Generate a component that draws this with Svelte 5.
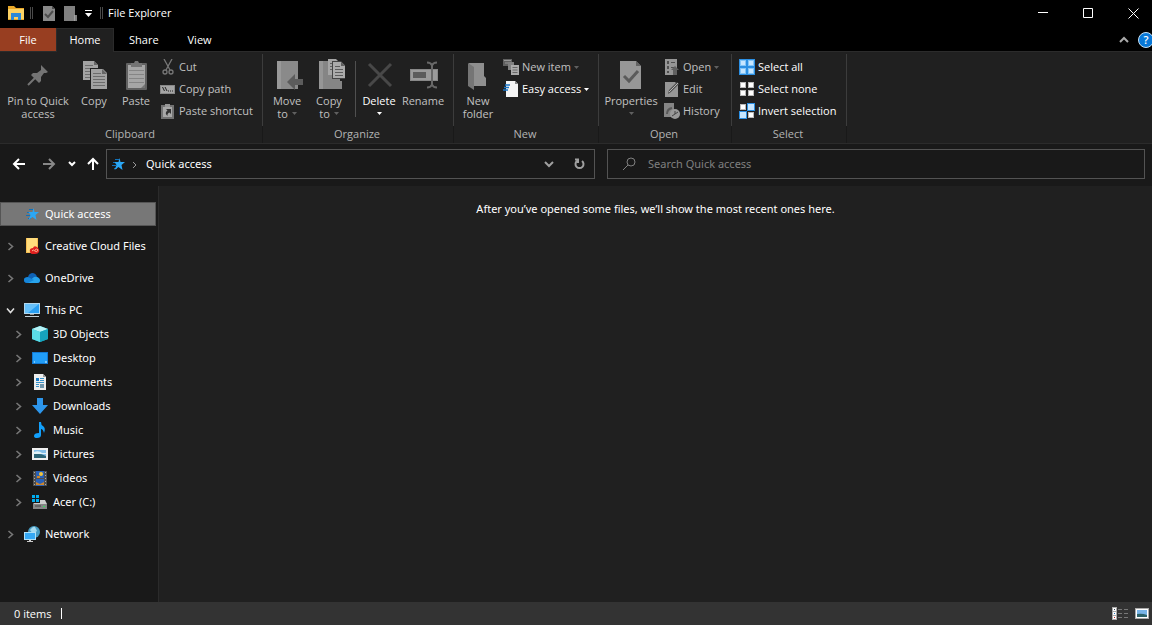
<script lang="ts">
  interface TreeItem {
    label: string;
    icon: string;
    open?: boolean;
    children?: TreeItem[];
  }

  // 32px ribbon icons
  const bigIcons: Record<string, string> = {
    pin: '<path d="M19 6l7 7-2 1-2 0-3 4 0 4-2 2-8-8 2-2 4 0 4-3 0-3z" fill="#747474"/><path d="M13 19l-7 7" stroke="#747474" stroke-width="2"/>',
    copy: '<path d="M5 2h11l4 4v15H5z" fill="#a2a2a2"/><path d="M16 2v4h4" fill="#666"/><path d="M7 6.500h8M7 9.500h10M7 12.500h10M7 15.500h10M7 18.500h10" stroke="#6c6c6c"/><path d="M12 9h13l5 5v17H12z" fill="#202020"/><path d="M13 10h12l4 4v16H13z" fill="#a2a2a2"/><path d="M24 10v5h5" fill="#666"/><path d="M15 14.500h8M15 17.500h12M15 20.500h12M15 23.500h12M15 26.500h12" stroke="#6c6c6c"/>',
    paste: '<rect x="6" y="4" width="21" height="27" rx="1" fill="#626262"/><path d="M8 6h17v23H8z" fill="#a6a6a6"/><path d="M9 11.500h15M9 15.500h15M9 19.500h15M9 23.500h15" stroke="#858585"/><path d="M11 4h3l1-2h3l1 2h3v4H11z" fill="#747474"/><path d="M21 29l4-4v4z" fill="#767676"/>',
    move: '<path d="M6 2h21v28H6z" fill="#8a8a8a"/><path d="M6 2h4v28H6z" fill="#999"/><path d="M16 23l8-8v5h8v6h-8v5z" fill="#5c5c5c"/>',
    copyto: '<path d="M6 2h21v20h2v8H6z" fill="#858585"/><path d="M6 2h4v28H6z" fill="#969696"/><path d="M15 0h8l3 3v13H15z" fill="#a5a5a5"/><path d="M17 4.500h6M17 7.500h6M17 10.500h6" stroke="#606060"/><path d="M19 2h9l4 4v14H19z" fill="#444"/><path d="M20 3h8l4 4v12H20z" fill="#ababab"/><path d="M22 7.500h5M22 10.500h8M22 13.500h8M22 16.500h8" stroke="#5c5c5c"/><path d="M28 3v4h4" fill="#606060"/>',
    delete: '<path d="M6 5l22 22M28 5L6 27" stroke="#484848" stroke-width="3"/>',
    rename: '<path d="M3 10h28v12H3z" fill="#888"/><path d="M4 11h26v10H4z" fill="#9b9b9b"/><path d="M6 13h13v6H6z" fill="#5c5c5c"/><path d="M25 5v22M20 3.500q4 0 5 3 1-3 5-3M20 28.500q4 0 5-3 1 3 5 3" fill="none" stroke="#686868" stroke-width="2"/>',
    folder: '<path d="M7 4h15v13l2 2v8H10z" fill="#8f8f8f"/><path d="M6 4l6 4v23l-6-4z" fill="#757575"/>',
    properties: '<path d="M5 2h16l5 5v23H5z" fill="#979797"/><path d="M21 2v5h5" fill="#636363"/><path d="M9 17l5 5 9-10" fill="none" stroke="#5a5a5a" stroke-width="3"/>',
  };

  // 16px icons
  const icons: Record<string, string> = {
    explorer: '<path d="M0 1h6l2 2h8v12H0z" fill="#e9a829"/><path d="M0 4h16v10H0z" fill="#fbd163"/><path d="M3 8h10v7h-3v-3H6v3H3z" fill="#2b88d8"/>',
    check: '<path d="M2 1h9l3 3v12H2z" fill="#898989"/><path d="M11 1v3h3" fill="#4d4d4d"/><path d="M4 9l3 3 5-6" fill="none" stroke="#4d4d4d" stroke-width="2"/>',
    doc: '<path d="M1 1h11v9h2v6H1z" fill="#808080"/><path d="M11 10h1v6h-1z" fill="#a0a0a0"/>',
    cut: '<path d="M4 0l6 11M12 0L6 11" stroke="#777" stroke-width="1.300"/><circle cx="5" cy="13" r="2" fill="none" stroke="#777" stroke-width="1.300"/><circle cx="11" cy="13" r="2" fill="none" stroke="#777" stroke-width="1.300"/>',
    path: '<path d="M0 4h15v9H0z" fill="#888"/><path d="M1 5h13v7H1z" fill="#a5a5a5"/><path d="M2.500 6l2 4M5 6l2 4M8 10h1M10 10h1M12 10h1" stroke="#222" fill="none"/>',
    shortcut: '<rect x="1" y="2" width="13" height="14" fill="#737373"/><path d="M3 4h9v10H3z" fill="#a8a8a8"/><path d="M5 1h5v3H5z" fill="#969696"/><path d="M6 6h5v5L9.500 9.500Q7 10.500 7.500 13 4 10 7.500 7.500z" fill="#333"/>',
    newitem: '<path d="M0 0h9v7H0z" fill="#606060"/><path d="M1 1.500h7M2 4h4" stroke="#979797"/><path d="M5 3h6v8H5z" fill="#808080"/><path d="M8 6h8v10H8z" fill="#aaa"/><path d="M9.500 8.500h5M9.500 11h5M9.500 13.500h5" stroke="#666"/>',
    easy: '<path d="M3 0h9l3 3v13H3z" fill="#f4f4f4"/><path d="M12 0v3h3" fill="#888"/><path d="M2 4h5M1 6.500h5M0 9h5" stroke="#1976c8" stroke-width="1.500"/>',
    open: '<path d="M1 0h12v16H1z" fill="#969696"/><path d="M3 2h2v3H3zM3 7h2v3H3zM3 12h2v2H3z" fill="#505050"/><path d="M7 3.500h4M7 8.500h4" stroke="#505050"/><path d="M7 11l4-4 4 4h-2v5H9v-5z" fill="#606060"/>',
    edit: '<path d="M1 1h10l3 3v12H1z" fill="#969696"/><path d="M4 13l1-4 8-8 2 2-8 8z" fill="#505050"/><path d="M5 11l9-9" stroke="#b4b4b4"/>',
    history: '<path d="M0 0h10v14H0z" fill="#858585"/><path d="M3 11q0-5 5-6" fill="none" stroke="#585858" stroke-width="2"/><circle cx="11" cy="11" r="5" fill="#999"/><path d="M11 8v3l3-2M11 11l-3 2" stroke="#444" fill="none"/>',
    selectall: '<path d="M0 0h16v16H0z" fill="#2b8fe3"/><path d="M1 1h6v6H1zM9 1h6v6H9zM1 9h6v6H1zM9 9h6v6H9z" fill="#83c5f7"/><path d="M2 2h4v4H2zM10 2h4v4h-4zM2 10h4v4H2zM10 10h4v4h-4z" fill="#c6e6ff"/>',
    selectnone: '<path d="M1 1h6v6H1zM9 1h6v6H9zM1 9h6v6H1zM9 9h6v6H9z" fill="#b9b9b9"/><path d="M2 2h4v4H2zM10 2h4v4h-4zM2 10h4v4H2zM10 10h4v4h-4z" fill="#fff"/>',
    invert: '<path d="M8 0h8v8H8zM0 8h8v8H0z" fill="#2b8fe3"/><path d="M1 1h6v6H1zM9 9h6v6H9z" fill="#b9b9b9"/><path d="M2 2h4v4H2zM10 10h4v4h-4z" fill="#fff"/><path d="M9 1h6v6H9zM1 9h6v6H1z" fill="#c6e6ff"/>',
    star: '<path d="M5 3.500h4M3 6.500h4M2 9.500h4M4 12.500h3" stroke="#1170b8"/><path d="M9.500 2l1 4 4.500 0-3.500 3 1 5-4-3-4 3 2-5-2-3 4 0z" fill="#2ba7f5"/>',
    creative: '<path d="M2 0h12v15H2z" fill="#f5bd52"/><path d="M3 0h10v14H3z" fill="#ffdc7c"/><path d="M6 14q-1-4 3-4 1-3 4-1 3 2 2 5-1 2-4 2-4 1-5-2z" fill="#df2020"/><path d="M8 13q1-2 3 0t3-1q-1-2-3 0" fill="none" stroke="#ffae8a"/>',
    onedrive: '<path d="M4 8q0-4 4-5 4 0 5 4 3 1 3 4 0 2-3 2H3q-3 0-3-3t4-2z" fill="#0f62b5"/><path d="M3 13l7-6q4-1 6 3 0 3-3 3z" fill="#28a4ec"/><path d="M0 10q0-3 4-3l6 3-6 3q-4 0-4-3z" fill="#1686d9"/>',
    pc: '<path d="M0 1h16v11H0z" fill="#b2d7ed"/><path d="M1 2h14v9H1z" fill="#299ff3"/><path d="M1 2h14L4 11H1z" fill="#66c0fa"/><path d="M6 12h4v1H6z" fill="#999"/><path d="M1 14h14v1H1z" fill="#c4d1d9"/>',
    cube: '<path d="M8 0l8 3v10l-8 3-8-3V3z" fill="#1fb7cd"/><path d="M8 0l8 3-8 3-8-3z" fill="#b6f2f6"/><path d="M0 3l8 3v10l-8-3z" fill="#5bdce7"/><path d="M8 6l8-3v10l-8 3z" fill="#16a3bd"/>',
    desktop: '<path d="M0 2h16v12H0z" fill="#1378d1"/><path d="M1 3h14v10H1z" fill="#219df7"/><path d="M2 12h1M13 12h2" stroke="#d2f0ff"/>',
    documents: '<path d="M2 0h9l3 3v13H2z" fill="#ededed"/><path d="M11 0v3h3" fill="#999"/><path d="M4 4h3v3H4z" fill="#187dc9"/><path d="M8 4.500h4M8 6.500h4M4 8.500h8M4 10.500h3M4 12.500h3" stroke="#3792ca"/><path d="M8 10h4v4H8z" fill="#7096ad"/>',
    downloads: '<path d="M5 0h6v7h5l-8 9-8-9h5z" fill="#2d96eb"/>',
    music: '<path d="M7 0h2q0 3 2 4 3 2 1 7-1-4-3-4v6q0 3-4 3-3 0-3-2 0-3 5-3z" fill="#12a0fb"/>',
    pictures: '<path d="M0 2h16v12H0z" fill="#eee"/><path d="M2 4h12v8H2z" fill="#85bfe9"/><path d="M2 8q6-1 12 2v2H2z" fill="#2d6577"/><path d="M2 6q5-2 8 1l4 0v1H2z" fill="#e1f1f7"/>',
    videos: '<path d="M1 1h14v15H1z" fill="#4e4e4e"/><path d="M4 1h8v7H4zM4 9h8v7H4z" fill="#2860b8"/><path d="M2.500 2v13M13.500 2v13" stroke="#aaa" stroke-dasharray="1 2"/><circle cx="9" cy="4" r="2" fill="#efc23b"/><path d="M5 6h3v2H5zM4 12l4 2 4-2v3H4z" fill="#cd852b"/>',
    drive: '<path d="M0 1h3v3H0zM4 1h3v3H4zM0 5h3v3H0zM4 5h3v3H4z" fill="#00adef"/><path d="M8 6h5l2 4H1l1-1h6z" fill="#ccc"/><path d="M1 10h14v5H1z" fill="#858585"/><path d="M3 12h6" stroke="#444"/><path d="M11 12.500h2" stroke="#2de25a"/>',
    network: '<circle cx="10" cy="6" r="6" fill="#479cc3"/><path d="M6 4q3-4 5-3l2 4-4 3z" fill="#a6daef"/><path d="M0 6h12v8H0z" fill="#b0e0f7"/><path d="M1 7h10v6H1z" fill="#35a8f4"/><path d="M5 14h2v1h2v1H3v-1h2z" fill="#ccc"/>',
    details: '<path d="M0 1h5v13H0z" fill="#aaa"/><path d="M1 2h3v3H1zM1 6h3v3H1zM1 10h3v3H1z" fill="#fff"/><path d="M2 3h1v1H2z" fill="#345"/><path d="M2 7h1v1H2z" fill="#2674bb"/><path d="M2 11h1v1H2z" fill="#c22"/><path d="M6 3.500h4M12 3.500h4M6 7.500h4M12 7.500h4M6 11.500h4M12 11.500h4" stroke="#777"/>',
    thumbs: '<path d="M1 2h14v11H1z" fill="#aaa"/><path d="M2 3h12v9H2z" fill="#fff"/><path d="M3 4h10v7H3z" fill="#78b4e8"/><path d="M3 8q5-1 10 1v2H3z" fill="#2c6269"/>',
  };

  const tabs = ['Home', 'Share', 'View'];
  let activeTab = $state('Home');
  let selected = $state('Quick access');
  let query = $state('');

  let tree = $state<TreeItem[]>([
    { label: 'Quick access', icon: 'star' },
    { label: 'Creative Cloud Files', icon: 'creative', children: [] },
    { label: 'OneDrive', icon: 'onedrive', children: [] },
    {
      label: 'This PC',
      icon: 'pc',
      open: true,
      children: [
        { label: '3D Objects', icon: 'cube', children: [] },
        { label: 'Desktop', icon: 'desktop', children: [] },
        { label: 'Documents', icon: 'documents', children: [] },
        { label: 'Downloads', icon: 'downloads', children: [] },
        { label: 'Music', icon: 'music', children: [] },
        { label: 'Pictures', icon: 'pictures', children: [] },
        { label: 'Videos', icon: 'videos', children: [] },
        { label: 'Acer (C:)', icon: 'drive', children: [] },
      ],
    },
    { label: 'Network', icon: 'network', children: [] },
  ]);
</script>

{#snippet icon(name: string)}
  <svg class="icon" viewBox="0 0 16 16" width="16" height="16" aria-hidden="true">{@html icons[name]}</svg>
{/snippet}

{#snippet caret()}
  <svg class="caret" viewBox="0 0 5 3" width="5" height="3" aria-hidden="true"><path d="M0 0h5L2.5 3z" fill="currentColor"/></svg>
{/snippet}

{#snippet big(name: string, line1: string, line2 = '', drop = false, enabled = false)}
  <button class="big {name}" class:enabled>
    <svg viewBox="0 0 32 32" width="32" height="32" aria-hidden="true">{@html bigIcons[name]}</svg>
    <span>{line1}</span>
    <span>{line2} {#if drop}{@render caret()}{/if}</span>
  </button>
{/snippet}

{#snippet small(name: string, label: string, drop = false, enabled = false)}
  <button class="small" class:enabled>
    {@render icon(name)}
    <span>{label}</span>
    {#if drop}{@render caret()}{/if}
  </button>
{/snippet}

{#snippet node(item: TreeItem)}
  <li>
    <div class="row" class:selected={selected === item.label}>
      {#if item.children}
        <button class="twisty" class:open={item.open} aria-label="Expand {item.label}" onclick={() => (item.open = !item.open)}>
          <svg viewBox="0 0 9 9" width="9" height="9"><path d="M2.500 1l4 3.500-4 3.500" fill="none" stroke="currentColor" stroke-width="1.600"/></svg>
        </button>
      {:else}
        <span class="twisty"></span>
      {/if}
      <button class="item" onclick={() => (selected = item.label)}>
        {@render icon(item.icon)}
        <span>{item.label}</span>
      </button>
    </div>
    {#if item.open && item.children?.length}
      <ul>
        {#each item.children as child (child.label)}
          {@render node(child)}
        {/each}
      </ul>
    {/if}
  </li>
{/snippet}

<div class="window">
  <header class="titlebar">
    {@render icon('explorer')}
    <span class="grip"></span>
    <button class="quick" aria-label="Properties">{@render icon('check')}</button>
    <button class="quick" aria-label="New folder">{@render icon('doc')}</button>
    <button class="customize" aria-label="Customize Quick Access Toolbar">
      <svg viewBox="0 0 8 8" width="8" height="8"><path d="M0 .5h7" stroke="#fff"/><path d="M0 3h7L3.500 7z" fill="#fff"/></svg>
    </button>
    <span class="grip"></span>
    <h1>File Explorer</h1>
    <div class="controls">
      <button aria-label="Minimize"><svg viewBox="0 0 11 11" width="11" height="11"><path d="M0 4.500h10"/></svg></button>
      <button aria-label="Maximize"><svg viewBox="0 0 11 11" width="11" height="11"><path d="M.5.5h9v9h-9z"/></svg></button>
      <button aria-label="Close"><svg viewBox="0 0 11 11" width="11" height="11"><path d="M.5.5l10 10M10.500.5l-10 10"/></svg></button>
    </div>
  </header>

  <nav class="tabs">
    <button class="file">File</button>
    {#each tabs as tab (tab)}
      <button class:active={tab === activeTab} onclick={() => (activeTab = tab)}>{tab}</button>
    {/each}
    <div class="tab-tools">
      <button aria-label="Minimize the Ribbon">
        <svg viewBox="0 0 10 8" width="10" height="8"><path d="M1 6l4-4 4 4" fill="none" stroke="#aaa" stroke-width="2"/></svg>
      </button>
      <button class="help" aria-label="Help">?</button>
    </div>
  </nav>

  <div class="ribbon">
    <section class="clipboard">
      <div class="body">
        {@render big('pin', 'Pin to Quick', 'access')}
        {@render big('copy', 'Copy')}
        {@render big('paste', 'Paste')}
        <div class="stack">
          {@render small('cut', 'Cut')}
          {@render small('path', 'Copy path')}
          {@render small('shortcut', 'Paste shortcut')}
        </div>
      </div>
      <h2>Clipboard</h2>
    </section>
    <section class="organize">
      <div class="body">
        {@render big('move', 'Move', 'to', true)}
        {@render big('copyto', 'Copy', 'to', true)}
        <span class="divider"></span>
        {@render big('delete', 'Delete', '', true, true)}
        {@render big('rename', 'Rename')}
      </div>
      <h2>Organize</h2>
    </section>
    <section class="new">
      <div class="body">
        {@render big('folder', 'New', 'folder')}
        <div class="stack">
          {@render small('newitem', 'New item', true)}
          {@render small('easy', 'Easy access', true, true)}
        </div>
      </div>
      <h2>New</h2>
    </section>
    <section class="open-group">
      <div class="body">
        {@render big('properties', 'Properties', '', true)}
        <div class="stack">
          {@render small('open', 'Open', true)}
          {@render small('edit', 'Edit')}
          {@render small('history', 'History')}
        </div>
      </div>
      <h2>Open</h2>
    </section>
    <section class="select">
      <div class="body">
        <div class="stack">
          {@render small('selectall', 'Select all', false, true)}
          {@render small('selectnone', 'Select none', false, true)}
          {@render small('invert', 'Invert selection', false, true)}
        </div>
      </div>
      <h2>Select</h2>
    </section>
  </div>

  <div class="navbar">
    <div class="history">
      <button aria-label="Back"><svg viewBox="0 0 14 12" width="14" height="12"><path d="M13 6H2M7 1L2 6l5 5"/></svg></button>
      <button class="dim" aria-label="Forward"><svg viewBox="0 0 14 12" width="14" height="12"><path d="M1 6h11M7 1l5 5-5 5"/></svg></button>
      <button class="recent" aria-label="Recent locations"><svg viewBox="0 0 8 6" width="8" height="6"><path d="M1 1l3 3 3-3"/></svg></button>
      <button class="up" aria-label="Up"><svg viewBox="0 0 12 14" width="12" height="14"><path d="M6 13V2M1 7l5-5 5 5"/></svg></button>
    </div>
    <div class="address">
      {@render icon('star')}
      <svg class="crumb" viewBox="0 0 9 9" width="9" height="9" aria-hidden="true"><path d="M3 2l3 3-3 3"/></svg>
      <button class="place">Quick access</button>
      <button class="tool" aria-label="Previous locations"><svg viewBox="0 0 10 8" width="10" height="8"><path d="M1 2l4 4 4-4"/></svg></button>
      <button class="tool" aria-label="Refresh"><svg viewBox="0 0 12 12" width="12" height="12"><path d="M9 3a4 4 0 1 1-5 0M2 1.500h3V5"/></svg></button>
    </div>
    <label class="search">
      <svg viewBox="0 0 14 14" width="14" height="14" aria-hidden="true"><circle cx="9" cy="5" r="4"/><path d="M6 8l-5 5"/></svg>
      <input type="text" aria-label="Search" placeholder="Search Quick access" bind:value={query} />
    </label>
  </div>

  <div class="main">
    <nav class="tree">
      <ul>
        {#each tree as item (item.label)}
          {@render node(item)}
        {/each}
      </ul>
    </nav>
    <main>
      <p>After you’ve opened some files, we’ll show the most recent ones here.</p>
    </main>
  </div>

  <footer>
    <span>0 items</span>
    <i></i>
    <div class="views">
      <button aria-label="Details view">{@render icon('details')}</button>
      <button aria-label="Large icons view">{@render icon('thumbs')}</button>
    </div>
  </footer>
</div>

<style>
  :global(body) {
    margin: 0;
    background: #202020;
  }

  .window {
    display: flex;
    flex-direction: column;
    min-height: 100vh;
    overflow: hidden;
    background: #191919;
    color: #fff;
    font-family: 'Open Sans', 'Noto Sans', sans-serif;
    font-size: 11px;
    line-height: 16px;
  }

  button {
    display: flex;
    align-items: center;
    padding: 0;
    border: 0;
    background: none;
    color: inherit;
    font: inherit;
    white-space: nowrap;
  }
  svg { display: block; flex: none; }
  h1, h2, p, ul { margin: 0; padding: 0; font: inherit; }
  ul { list-style: none; }

  .titlebar {
    display: flex;
    align-items: center;
    height: 28px;
    padding: 0 0 2px 8px;
    box-sizing: border-box;
    background: #000;
  }
  .grip {
    width: 1px;
    height: 12px;
    margin: 0 5px 0 6px;
    border: solid #494949;
    border-width: 0 1px;
  }
  .quick { margin: 0 3px; }
  .customize { margin: 2px 1px 0 3px; }

  .controls {
    display: flex;
    height: 26px;
    margin-left: auto;
  }
  .controls button { padding: 0 17px; }
  .controls button:last-child { padding-right: 13px; }
  .controls button:hover { background: #333; }
  .controls path { fill: none; stroke: #fff; }

  .tabs {
    display: flex;
    height: 24px;
    background: #000;
    border-bottom: 1px solid #2b2b2b;
    box-sizing: border-box;
  }
  .tabs > button {
    height: 23px;
    padding: 0 14px 0 15px;
  }
  .tabs > .file {
    justify-content: center;
    width: 56px;
    padding: 0;
    background: #983e21;
  }
  .tabs > .active {
    justify-content: center;
    width: 58px;
    height: 24px;
    padding: 0 0 1px;
    box-sizing: border-box;
    background: #202020;
    border: 1px solid #2b2b2b;
    border-bottom: 0;
  }
  .tab-tools {
    display: flex;
    align-items: center;
    gap: 9px;
    margin-left: auto;
  }
  .help {
    justify-content: center;
    width: 16px;
    height: 16px;
    margin-right: -2px;
    box-sizing: border-box;
    border: 1px solid #c8e2f5;
    border-radius: 50%;
    background: #0878d8;
    font-weight: 600;
  }

  .ribbon {
    display: flex;
    padding-top: 2px;
    background: #202020;
    border-bottom: 1px solid #2b2b2b;
    color: #c0c0c0;
  }
  section { box-sizing: border-box; }
  .clipboard { width: 263px; }
  .organize { width: 191px; }
  .new { width: 145px; }
  .open-group { width: 133px; }
  .select { width: 115px; }
  .body {
    display: flex;
    height: 72px;
    padding: 2px 0 0 3px;
    box-sizing: border-box;
    border-right: 1px solid #3c3c3c;
  }
  h2 {
    padding: 0 2px 1px 0;
    border-right: 1px solid #191919;
    text-align: center;
    color: #b4b4b4;
  }

  .big {
    flex-direction: column;
    width: 42px;
    height: 66px;
    padding-top: 3px;
    line-height: 13px;
  }
  .big svg:first-child { margin-bottom: 3px; }
  .big span { min-height: 13px; }
  .pin { width: 70px; }
  .rename { width: 46px; }
  .properties { width: 58px; }
  .enabled { color: #fff; }
  .big:hover, .small:hover { background: #2d2d2d; }
  .caret {
    display: inline-block;
    margin-left: 1px;
    vertical-align: middle;
    opacity: 0.4;
  }
  .enabled .caret { opacity: 1; }
  .divider {
    width: 1px;
    height: 56px;
    margin: 5px 2px 0 5px;
    background: #505050;
  }
  .stack {
    display: flex;
    flex-direction: column;
    align-items: flex-start;
    margin-left: 4px;
  }
  .clipboard .stack { margin-left: 3px; }
  .small { gap: 3px; height: 22px; }
  .small .caret { margin-left: 0; }

  .navbar {
    display: grid;
    grid-template-columns: 94px minmax(0, 489fr) minmax(0, 538fr);
    column-gap: 12px;
    padding: 5px 7px 7px 0;
    font-family: 'Noto Sans', 'Open Sans', sans-serif;
  }
  .navbar path, .navbar circle { stroke: currentColor; }
  .navbar .history path, .address > svg.crumb path, .tool path, .search path, .search circle { fill: none; }
  .history {
    display: flex;
    padding-left: 12px;
  }
  .history path { stroke-width: 2; }
  .history button { flex: none; margin-right: 16px; }
  .history .dim { color: #888; margin-right: 12px; }
  .history .recent { margin-right: 11px; }
  .history .up { margin: 0; }
  .address, .search {
    display: flex;
    align-items: center;
    height: 30px;
    box-sizing: border-box;
    border: 1px solid #535353;
  }
  .address {
    padding-left: 3px;
    margin-left: 0;
  }
  .crumb { margin: 0 7px 0 4px; color: #999; }
  .place { flex: 1; }
  .tool {
    justify-content: center;
    width: 30px;
    height: 28px;
    color: #a0a0a0;
  }
  .tool path { stroke-width: 2; }
  .search {
    gap: 12px;
    padding-left: 14px;
    color: #808080;
  }
  .search input {
    flex: 1;
    min-width: 0;
    padding: 0;
    border: 0;
    outline: 0;
    background: none;
    color: #fff;
    font: inherit;
  }
  .search input::placeholder { color: #808080; opacity: 1; }

  .main {
    display: flex;
    flex: 1;
    font-family: 'Noto Sans', 'Open Sans', sans-serif;
  }
  .tree {
    width: 159px;
    flex: none;
    padding-top: 16px;
    box-sizing: border-box;
    border-right: 1px solid #2b2b2b;
  }
  .tree > ul {
    display: flex;
    flex-direction: column;
    gap: 8px;
  }
  .tree ul ul { padding-left: 8px; }
  .row {
    display: flex;
    align-items: center;
    height: 24px;
    box-sizing: border-box;
    border: 1px solid transparent;
  }
  .row.selected {
    margin-right: 2px;
    background: #777;
    border-color: #555;
  }
  .twisty {
    width: 9px;
    margin: 0 9px 0 5px;
    color: #777;
  }
  .twisty.open svg { transform: rotate(90deg); }
  .twisty.open { color: #ddd; }
  .item { flex: 1; gap: 5px; }

  main {
    flex: 1;
    padding: 15px 16px;
    background: #202020;
    text-align: center;
  }

  footer {
    display: flex;
    align-items: center;
    height: 23px;
    padding: 0 2px 0 14px;
    background: #333;
  }
  footer i {
    width: 1px;
    height: 11px;
    margin-left: 10px;
    background: #fff;
  }
  .views {
    display: flex;
    gap: 6px;
    margin-left: auto;
  }
</style>
